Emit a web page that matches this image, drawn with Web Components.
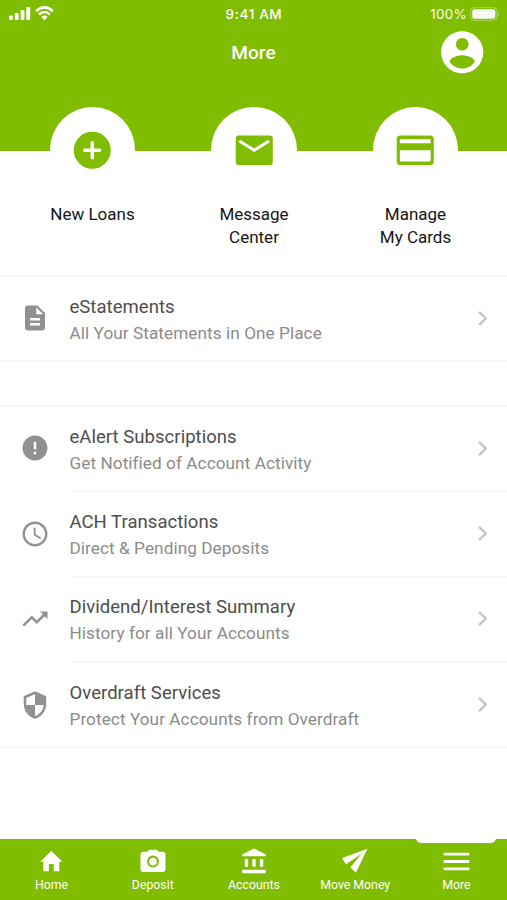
<!DOCTYPE html>
<html lang="en">
<head>
<meta charset="utf-8">
<title>More</title>
<style>
html,body{margin:0;height:100%}
body{font-family:Roboto,"Noto Sans",sans-serif;background:#fff;--green:#80bc00;overflow:hidden}
</style>
</head>
<body>
<more-screen></more-screen>
<script>
const ICONS={
 user:'<path d="M12 2C6.48 2 2 6.48 2 12s4.480 10 10 10 10-4.480 10-10S17.520 2 12 2zm0 3.200c1.660 0 3 1.340 3 3s-1.340 3-3 3-3-1.340-3-3 1.340-3 3-3zm0 14.500c-2.500 0-4.710-1.280-6-3.220.03-1.990 4-3.080 6-3.080s5.970 1.090 6 3.080c-1.290 1.940-3.500 3.220-6 3.220z"/>',
 plus:'<circle cx="12" cy="12" r="10"/><path d="M12 8v8M8 12h8" stroke="#fff" stroke-width="1.950" stroke-linecap="round"/>',
 mail:'<rect x="2" y="4" width="20" height="16" rx="1.700"/><path d="M4.600 7.400 12 12l7.400-4.600" fill="none" stroke="#fff" stroke-width="1.700" stroke-linecap="round"/>',
 card:'<path fill-rule="evenodd" d="M4 4h16a2 2 0 0 1 2 2v12a2 2 0 0 1-2 2H4a2 2 0 0 1-2-2V6a2 2 0 0 1 2-2zm.1 2a.4.4 0 0 0-.4.4V8.200h16.600V6.400a.4.4 0 0 0-.4-.4zM3.700 12v5.400a.7.7 0 0 0 .7.7h15.200a.7.7 0 0 0 .7-.7V12z"/>',
 doc:'<path d="M14 2H6c-1.100 0-1.990.9-1.990 2L4 20c0 1.100.89 2 1.990 2H18c1.100 0 2-.9 2-2V8l-6-6zm2 16H8v-2h8v2zm0-4H8v-2h8v2zm-3-5V3.500L18.500 9H13z"/>',
 alert:'<path d="M12 2C6.480 2 2 6.480 2 12s4.480 10 10 10 10-4.480 10-10S17.520 2 12 2zm1 15h-2v-2h2v2zm0-4h-2V7h2v6z"/>',
 clock:'<path d="M11.990 2C6.470 2 2 6.480 2 12s4.470 10 9.990 10C17.520 22 22 17.520 22 12S17.520 2 11.990 2zM12 20c-4.420 0-8-3.580-8-8s3.580-8 8-8 8 3.580 8 8-3.580 8-8 8zm.5-13H11v6l5.250 3.150.75-1.230-4.500-2.670z"/>',
 trend:'<path d="M16 6l2.290 2.290-4.880 4.880-4-4L2 16.590 3.410 18l6-6 4 4 6.300-6.290L22 12V6z"/>',
 shield:'<path d="M12 1L3 5v6c0 5.550 3.840 10.740 9 12 5.160-1.260 9-6.450 9-12V5l-9-4zm0 10.990h7c-.53 4.120-3.280 7.790-7 8.940V12H5V6.300l7-3.110v8.800z"/>',
 home:'<path d="M9.800 21v-6.500h4.400V21h4.200c.5 0 .8-.3.8-.8V12.400H22L12 2.700 2 12.400h2.800v7.800c0 .5.3.8.8.8z"/>',
 camera:'<path fill-rule="evenodd" d="M9 3 7.400 4.600H4c-1.100 0-2 .9-2 2v12.200c0 1.100.9 2 2 2h16c1.100 0 2-.9 2-2V6.600c0-1.100-.9-2-2-2h-3.400L15 3H9zm3 14.200a4.800 4.800 0 1 1 0-9.600 4.800 4.800 0 0 1 0 9.600z"/><circle cx="12" cy="12.400" r="3.100"/>',
 bank:'<path d="M12 1.900 2.500 6.800v1.300h19V6.800z"/><rect x="4.600" y="10.200" width="2.700" height="6.600" rx="1.200"/><rect x="10.650" y="10.200" width="2.700" height="6.600" rx="1.200"/><rect x="16.700" y="10.200" width="2.700" height="6.600" rx="1.200"/><rect x="2.500" y="19" width="19" height="2.700" rx=".8"/>',
 send:'<path d="M22.300 2.300 1.800 9.700 4.800 14.900 17.400 6.500 8.500 17.200 12.900 21.800z"/>',
 menu:'<rect x="2" y="5.200" width="20" height="2.200" rx=".6"/><rect x="2" y="10.900" width="20" height="2.200" rx=".6"/><rect x="2" y="16.600" width="20" height="2.200" rx=".6"/>',
 chevron:'<path d="M8.700 5.600 15.200 12l-6.500 6.400" fill="none" stroke="currentColor" stroke-width="2.200"/>'
};
function define(name,render){
  customElements.define(name,class extends HTMLElement{
    connectedCallback(){
      if(this.shadowRoot)return;
      this.attachShadow({mode:'open'}).innerHTML=render(this);
    }
  });
}
define('app-icon',el=>`<style>:host{display:block;width:var(--size,24px);height:var(--size,24px);flex:none}svg{display:block;width:100%;height:100%;fill:currentColor}</style><svg viewBox="0 0 24 24">${ICONS[el.getAttribute('name')]}</svg>`);

define('status-bar',()=>`<style>
:host{display:grid;grid-template-columns:1fr auto 1fr;align-items:center;height:28px;padding:0 6px 0 9px;color:#fff;font:13.5px Inter,sans-serif;letter-spacing:.25px}
.left,.right{display:flex;align-items:center}.right{justify-content:flex-end;gap:3px;opacity:.95}
.left{gap:4px;margin-top:-2px}svg{display:block;fill:#fff}.time{font-weight:500;font-size:13.6px;letter-spacing:.6px;margin-left:-2px}
</style><div class="left">
<svg width="22" height="15" viewBox="0 0 22 15"><rect y="9.500" width="3.800" height="4.500" rx="1"/><rect x="5.800" y="7" width="3.800" height="7" rx="1"/><rect x="11.600" y="4" width="3.800" height="10" rx="1"/><rect x="17.300" y="1" width="3.900" height="13" rx="1"/></svg>
<svg width="19" height="15" viewBox="0 0 19 15"><g fill="none" stroke="#fff" stroke-width="2.500"><path d="M1.100 5.200Q9.500-2.400 17.900 5.200"/><path d="M4 8.500Q9.500 3.600 15 8.500"/></g><path d="M6.300 10.900Q9.500 8.200 12.700 10.900L9.500 14.200z"/></svg>
</div><span class="time">9:41 AM</span><div class="right"><span>100%</span>
<svg width="31" height="14" viewBox="0 0 31 14"><rect x=".7" y=".7" width="26.300" height="12.600" rx="3.500" fill="none" stroke="#fff" stroke-opacity=".4"/><rect x="2.300" y="2.300" width="23" height="9.400" rx="2"/><path d="M28.300 4.700q1.900 2.300 0 4.600z" opacity=".5"/></svg></div>`);

define('page-header',()=>`<style>
:host{display:block;height:151px;background:var(--green);color:#fff}
.bar{display:grid;grid-template-columns:1fr auto 1fr;align-items:center;height:50px}
h1{grid-column:2;margin:0;font-size:19.1px;font-weight:500;line-height:24px}
app-icon{justify-self:end;--size:50.500px;margin:-2px 20px 0 0}
</style><status-bar></status-bar><div class="bar"><h1><slot></slot></h1><app-icon name="user"></app-icon></div>`);

define('quick-action',el=>`<style>
:host{display:flex;flex-direction:column;align-items:center;width:161.500px;text-align:center;color:#151515;font-size:17px;line-height:22.5px}
.disc{display:grid;place-items:center;width:85.500px;height:86px;border-radius:50%;background:#fff;color:var(--green);box-shadow:0 2px 3px rgba(0,0,0,.012);margin-bottom:10px}
app-icon{--size:44.500px}
</style><div class="disc"><app-icon name="${el.getAttribute('icon')}"></app-icon></div><span><slot></slot></span>`);

define('list-row',el=>`<style>
:host{display:flex;height:85.400px;box-sizing:border-box;padding-left:20px}
.icon{display:flex;align-items:center;width:49.500px;padding-bottom:2.600px;color:#919191}
.icon app-icon{--size:30px}
.body{flex:1;display:flex;align-items:center;justify-content:space-between;padding-right:10px;border-bottom:2px solid #f8f8f8}
:host([last]) .body{border-color:transparent}
.text{padding-top:2px}
.title{color:#4d4d4d;font-size:18.5px;line-height:26px;letter-spacing:.04px}
.sub{color:#8b8b8b;font-size:17.2px;line-height:26px;letter-spacing:.06px}
.chev{color:#c4c4c4;--size:25px;margin:-1px 2px 0 0}
</style><div class="icon"><app-icon name="${el.getAttribute('icon')}"></app-icon></div><div class="body"><div class="text"><div class="title"><slot></slot></div><div class="sub"><slot name="sub"></slot></div></div><app-icon class="chev" name="chevron"></app-icon></div>`);

define('list-group',()=>`<style>:host{display:block;border-top:2px solid #f7f7f7;border-bottom:2px solid #f7f7f7;margin-bottom:43px}::slotted([last]){margin-bottom:-2.400px}</style><slot></slot>`);

define('tab-item',el=>{const s=+el.getAttribute('size');return `<style>
:host{display:flex;flex:1;flex-direction:column;align-items:center;position:relative;color:#fff;padding-top:9px;gap:2.500px;font-size:12.3px;line-height:16px}
:host([active])::before{content:"";position:absolute;top:-2px;left:50%;margin-left:-40px;width:80px;height:6px;background:#fff;border-radius:0 0 5px 5px}
app-icon{--size:${s}px;margin:${(26-s)/2}px 0}
</style><app-icon name="${el.getAttribute('icon')}"></app-icon><span><slot></slot></span>`});

define('tab-bar',()=>`<style>:host{display:flex;height:61px;box-sizing:border-box;padding-left:1px;background:var(--green)}</style><slot></slot>`);

define('more-screen',()=>`<style>
:host{display:flex;flex-direction:column;width:507px;height:900px;background:#fff}
.actions{display:flex;height:168px;margin:-44px 0 0 11.750px}
main{flex:1}
</style>
<page-header>More</page-header>
<div class="actions"><quick-action icon="plus">New Loans</quick-action><quick-action icon="mail">Message<br>Center</quick-action><quick-action icon="card">Manage<br>My Cards</quick-action></div>
<main>
<list-group><list-row icon="doc" last>eStatements<span slot="sub">All Your Statements in One Place</span></list-row></list-group>
<list-group>
<list-row icon="alert">eAlert Subscriptions<span slot="sub">Get Notified of Account Activity</span></list-row>
<list-row icon="clock">ACH Transactions<span slot="sub">Direct &amp; Pending Deposits</span></list-row>
<list-row icon="trend">Dividend/Interest Summary<span slot="sub">History for all Your Accounts</span></list-row>
<list-row icon="shield" last>Overdraft Services<span slot="sub">Protect Your Accounts from Overdraft</span></list-row>
</list-group></main>
<tab-bar><tab-item icon="home" size="26.600">Home</tab-item><tab-item icon="camera" size="30">Deposit</tab-item><tab-item icon="bank" size="30">Accounts</tab-item><tab-item icon="send" size="29.500">Move Money</tab-item><tab-item icon="menu" size="31" active>More</tab-item></tab-bar>`);
</script>
</body>
</html>
